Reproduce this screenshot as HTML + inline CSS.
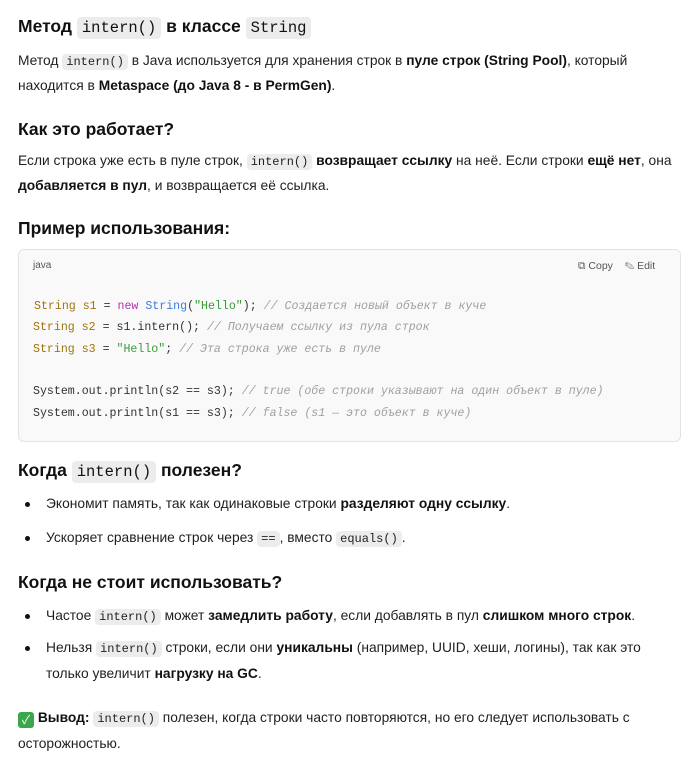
<!DOCTYPE html>
<html><head><meta charset="utf-8"><style>
body{margin:0;width:691px;height:757px;background:#fff;font-family:"Liberation Sans","Noto Sans CJK SC",sans-serif;color:#1f1f1f;position:relative;overflow:hidden}
.l{position:absolute;left:18px;white-space:nowrap;font-size:13.8px;line-height:20px}
.h{position:absolute;left:18px;white-space:nowrap;font-size:17.5px;font-weight:bold;line-height:24px;color:#111}
code{font-family:"Liberation Mono","DejaVu Sans Mono",monospace;background:#ececec;border-radius:4px;padding:1px 4px;font-size:12px}
.h code{font-size:15.5px;font-weight:normal;padding:2px 5px}
b{font-weight:bold;color:#111}
.box{position:absolute;left:18px;top:249px;width:661px;height:191px;background:#f9f9f9;border:1px solid #e3e3e3;border-radius:6px}
.c{position:absolute;left:33px;white-space:nowrap;font-family:"Liberation Mono","DejaVu Sans Mono",monospace;font-size:11.6px;line-height:16px;color:#333}
.t{color:#a0740a}.k{color:#b030b0}.f{color:#3f7be0}.s{color:#3a9a3a}.m{color:#a0a0a0;font-style:italic}
.dot{position:absolute;left:25px;width:5px;height:5px;border-radius:50%;background:#111}
</style></head><body>
<div class="h" style="top:14px">Метод <code>intern()</code> в классе <code>String</code></div>
<div class="l" style="top:51px">Метод <code>intern()</code> в Java используется для хранения строк в <b>пуле строк (String Pool)</b>, который</div>
<div class="l" style="top:76px">находится в <b>Metaspace (до Java 8 - в PermGen)</b>.</div>
<div class="h" style="top:117px">Как это работает?</div>
<div class="l" style="top:151px">Если строка уже есть в пуле строк, <code>intern()</code> <b>возвращает ссылку</b> на неё. Если строки <b>ещё нет</b>, она</div>
<div class="l" style="top:176px"><b>добавляется в пул</b>, и возвращается её ссылка.</div>
<div class="h" style="top:216px">Пример использования:</div>
<div class="box"></div>
<div class="l" style="top:256px;left:33px;font-size:10px;color:#555">java</div>
<div class="l" style="top:256px;left:578px;font-size:10.5px;color:#555">⧉ Copy &nbsp;&nbsp; ✎ Edit</div>
<div class="c" style="top:299px;left:34px"><span class="t">String s1</span> = <span class="k">new</span> <span class="f">String</span>(<span class="s">"Hello"</span>); <span class="m">// Создается новый объект в куче</span></div>
<div class="c" style="top:320px"><span class="t">String s2</span> = s1.intern(); <span class="m">// Получаем ссылку из пула строк</span></div>
<div class="c" style="top:342px"><span class="t">String s3</span> = <span class="s">"Hello"</span>; <span class="m">// Эта строка уже есть в пуле</span></div>
<div class="c" style="top:384px">System.out.println(s2 == s3); <span class="m">// true (обе строки указывают на один объект в пуле)</span></div>
<div class="c" style="top:406px">System.out.println(s1 == s3); <span class="m">// false (s1 — это объект в куче)</span></div>
<div class="h" style="top:458px">Когда <code>intern()</code> полезен?</div>
<div class="dot" style="top:502px"></div>
<div class="l" style="top:494px;left:46px">Экономит память, так как одинаковые строки <b>разделяют одну ссылку</b>.</div>
<div class="dot" style="top:536px"></div>
<div class="l" style="top:528px;left:46px">Ускоряет сравнение строк через <code>==</code>, вместо <code>equals()</code>.</div>
<div class="h" style="top:570px">Когда не стоит использовать?</div>
<div class="dot" style="top:614px"></div>
<div class="l" style="top:606px;left:46px">Частое <code>intern()</code> может <b>замедлить работу</b>, если добавлять в пул <b>слишком много строк</b>.</div>
<div class="dot" style="top:646px"></div>
<div class="l" style="top:638px;left:46px">Нельзя <code>intern()</code> строки, если они <b>уникальны</b> (например, UUID, хеши, логины), так как это</div>
<div class="l" style="top:664px;left:46px">только увеличит <b>нагрузку на GC</b>.</div>
<div class="l" style="top:708px"><span style="display:inline-block;width:16px;height:16px;background:#3aa84a;border-radius:3px;color:#fff;font-size:12px;line-height:16px;text-align:center;vertical-align:-2px">✓</span> <b>Вывод:</b> <code>intern()</code> полезен, когда строки часто повторяются, но его следует использовать с</div>
<div class="l" style="top:734px">осторожностью.</div>
</body></html>
